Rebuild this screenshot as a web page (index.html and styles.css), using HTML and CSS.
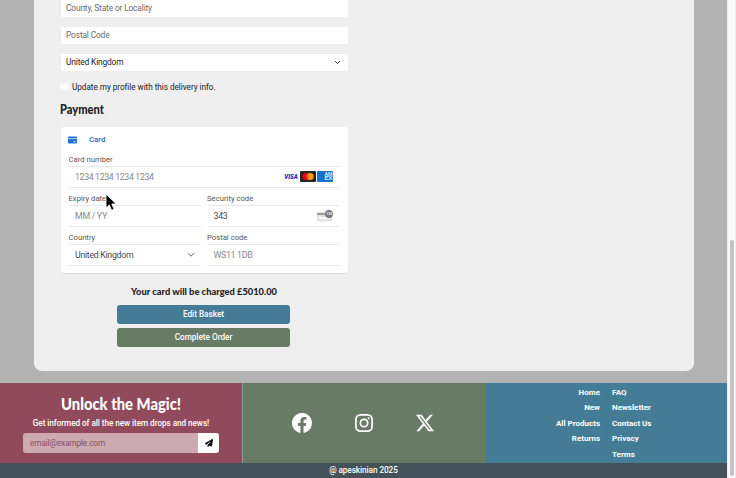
FILE: index.html
```html
<!DOCTYPE html>
<html lang="en">
<head>
<meta charset="utf-8">
<title>Checkout</title>
<link rel="stylesheet" href="styles.css">
</head>
<body>
<div class="page">
  <main class="panel">
    <form class="checkout">
      <div class="field first">County, State or Locality</div>
      <div class="field">Postal Code</div>
      <div class="field select"><span>United Kingdom</span><svg width="7" height="5" viewBox="0 0 7 5"><path d="M1 1l2.5 2.5L6 1" fill="none" stroke="#444" stroke-width="1"/></svg></div>
      <label class="update"><i class="box"></i><span>Update my profile with this delivery info.</span></label>
      <h2 class="heading"><svg width="60" height="20"><text x="0" y="14" textLength="44" lengthAdjust="spacingAndGlyphs">Payment</text></svg></h2>
      <section class="card">
        <div class="method">
          <svg width="9" height="8" viewBox="0 0 9 8"><rect y=".5" width="9" height="7" rx="1" fill="#2470d0"/><path d="M0 2.6h9" stroke="#d5e5fa" stroke-width=".8"/><path d="M5.5 5.8h2" stroke="#fff" stroke-width=".8"/></svg>
          <span>Card</span>
        </div>
        <div class="label">Card number</div>
        <div class="input"><span class="muted number">1234 1234 1234 1234</span>
          <span class="brands">
            <svg width="16" height="11" viewBox="0 0 16 11"><rect x=".3" y=".3" width="15.4" height="10.4" rx="1" fill="#fff" stroke="#eee" stroke-width=".6"/><text x="1.2" y="7.8" class="visa" textLength="13.6" lengthAdjust="spacingAndGlyphs">VISA</text></svg>
            <svg width="16" height="11" viewBox="0 0 16 11"><rect width="16" height="11" rx="1" fill="#252525"/><circle cx="5.8" cy="5.5" r="3.5" fill="#eb001b"/><circle cx="10.2" cy="5.5" r="3.5" fill="#f79e1b"/><path d="M8 2.8a3.5 3.5 0 010 5.4a3.5 3.5 0 010-5.4" fill="#ff5f00"/></svg>
            <svg width="16" height="11" viewBox="0 0 16 11"><rect width="16" height="11" rx="1" fill="#1672cf"/><text x="7.5" y="5.2" class="amex" textLength="8" lengthAdjust="spacingAndGlyphs">AM</text><text x="7.5" y="9.4" class="amex" textLength="8" lengthAdjust="spacingAndGlyphs">EX</text></svg>
          </span>
        </div>
        <div class="pair">
          <div><div class="label">Expiry date</div><div class="input"><span class="muted">MM / YY</span></div></div>
          <div><div class="label">Security code</div><div class="input"><span>343</span>
            <svg class="cvc" width="16" height="12" viewBox="0 0 16 12"><rect y="2" width="15" height="9.5" rx="1" fill="#e2e2e2"/><path d="M0 4h12" stroke="#888" stroke-width="1.5"/><path d="M2 8h9" stroke="#fff" stroke-width="1.6"/><circle cx="12" cy="4" r="4" fill="#77777a"/><text x="9.2" y="5.3" class="digits">123</text></svg></div></div>
        </div>
        <div class="pair">
          <div><div class="label">Country</div><div class="input"><span>United Kingdom</span><svg class="chev" width="8" height="6" viewBox="0 0 8 6"><path d="M1 1.2l3 3 3-3" fill="none" stroke="#666"/></svg></div></div>
          <div><div class="label">Postal code</div><div class="input"><span class="muted">WS11 1DB</span></div></div>
        </div>
      </section>
      <p class="charge"><svg width="148" height="13"><text x="1" y="10" textLength="146" lengthAdjust="spacingAndGlyphs">Your card will be charged £5010.00</text></svg></p>
      <button class="btn blue" type="button">Edit Basket</button>
      <button class="btn green" type="button">Complete Order</button>
    </form>
  </main>
  <footer class="footer">
    <section class="news">
      <h3><svg width="140" height="24"><text x="10" y="18" textLength="120" lengthAdjust="spacingAndGlyphs">Unlock the Magic!</text></svg></h3>
      <p>Get informed of all the new item drops and news!</p>
      <div class="signup"><span class="email">email@example.com</span><span class="send"><svg width="8" height="8" viewBox="0 0 512 512"><path fill="#111" d="M498.100 5.600c10.100 7 15.400 19.100 13.500 31.200l-64 416c-1.500 9.700-7.400 18.200-16 23s-18.900 5.400-28 1.600L284 427.700l-68.500 74.100c-8.900 9.700-22.900 12.900-35.200 8.100S160 493.200 160 480v-83.600c0-4 1.500-7.800 4.200-10.800l167.600-182.800c5.800-6.300 5.600-16-.4-22s-15.700-6.400-22-.7L106 360.800 17.700 316.600C7.100 311.300.3 300.700 0 288.900s5.900-22.800 16.100-28.700l448-256c10.700-6.100 23.900-5.500 34 1.400z"/></svg></span></div>
    </section>
    <section class="social">
      <svg width="20" height="20" viewBox="0 0 16 16" fill="#fff"><path d="M16 8.049c0-4.446-3.582-8.050-8-8.050C3.580 0-.002 3.603-.002 8.050c0 4.017 2.926 7.347 6.750 7.951v-5.625h-2.030V8.050H6.750V6.275c0-2.017 1.195-3.131 3.022-3.131.876 0 1.791.157 1.791.157v1.980h-1.009c-.993 0-1.303.621-1.303 1.258v1.510h2.218l-.354 2.326H9.250V16c3.824-.604 6.750-3.934 6.750-7.951"/></svg>
      <svg width="18" height="18" viewBox="0 0 18 18" fill="none" stroke="#fff" stroke-width="1.700"><rect x=".9" y=".9" width="16.200" height="16.200" rx="4.500"/><circle cx="9" cy="9" r="3.700"/><circle cx="13.700" cy="4.300" r="1.100" fill="#fff" stroke="none"/></svg>
      <svg width="18" height="18" viewBox="0 0 16 16" fill="#fff"><path d="M12.600.75h2.454l-5.360 6.142L16 15.250h-4.937l-3.867-5.070-4.425 5.070H.316l5.733-6.570L0 .75h5.063l3.495 4.633L12.601.75Zm-.86 13.028h1.360L4.323 2.145H2.865z"/></svg>
    </section>
    <nav class="links">
      <ul class="left"><li>Home</li><li>New</li><li>All Products</li><li>Returns</li></ul>
      <ul><li>FAQ</li><li>Newsletter</li><li>Contact Us</li><li>Privacy</li><li>Terms</li></ul>
    </nav>
  </footer>
  <div class="copyright">@ apeskinian 2025</div>
</div>
<div class="track"><div class="thumb"></div></div>
<svg class="cursor" width="13" height="19" viewBox="0 0 13 19"><path d="M1 1v14l3.300-3.100 2.300 5.400 2.500-1.100-2.300-5.200h4.500z" fill="#000" stroke="#fff" stroke-width=".9"/></svg>
</body>
</html>
```
FILE: styles.css
```css
* { box-sizing: border-box; }
body { margin: 0; width: 736px; height: 478px; overflow: hidden; display: flex; font: 8px/12px Roboto, sans-serif; color: #222; background: #fff; }
.page { width: 727px; height: 478px; background: #b3b3b3; }
.panel { margin: 0 33px 12px 34px; height: 371px; background: #efefef; border-radius: 0 0 8px 8px; }
.checkout { margin-left: 27px; width: 287px; display: flex; flex-direction: column; }
.field { height: 17px; margin-bottom: 10px; padding: 0 7px 0 5px; background: #fff; color: #6b6b6b; display: flex; align-items: center; justify-content: space-between; font-size: 8.400px; line-height: 17px; letter-spacing: -.15px; }
.field.select { color: #222; margin-bottom: 9px; }
.update { display: flex; align-items: center; height: 13px; gap: 3px; margin-left: -1px; font-size: 8.200px; letter-spacing: -.04px; white-space: nowrap; }
.box { width: 9px; height: 7px; background: #fafafa; border-radius: 2px; }
h2 svg, h3 svg, p svg { display: block; overflow: visible; }
h2 text, h3 text, p text { fill: currentColor; }
.heading { margin: 7px 0 7px -1px; font: 900 12.600px/20px Lato, sans-serif; color: #222; }
.card { height: 146px; padding: 7px 9px 0 8px; background: #fff; border-radius: 3px; box-shadow: 0 1px 1px #ddd; color: #555; }
.method { height: 12px; display: flex; align-items: center; gap: 12px; margin-left: -1px; color: #246bc4; font-weight: 500; font-size: 7.800px; margin-bottom: 8px; }
.label { height: 12px; font-size: 7.700px; margin-left: -.5px; }
.input { height: 22px; margin-bottom: 5px; padding: 0 6px; border: solid #e8e8e8; border-width: 1px 0; display: flex; align-items: center; justify-content: space-between; font-size: 8.800px; line-height: 11px; letter-spacing: -.3px; color: #4a4a4a; }
.muted { color: #898989; }
.number { letter-spacing: -.37px; }
.brands { display: flex; gap: 1px; margin-top: -1px; }
.visa { font: italic 900 6.500px Roboto, sans-serif; letter-spacing: 0; fill: #1a2fae; }
.amex { font: 700 4.600px Roboto, sans-serif; letter-spacing: 0; fill: #d6e8fc; }
.digits { font: 700 3.500px Roboto, sans-serif; letter-spacing: 0; fill: #fff; }
.pair { display: grid; grid-template-columns: 1fr 1fr; column-gap: 7px; }
.charge { margin: 12px 0 7px -1px; height: 13px; font: 900 9.400px/13px Lato, sans-serif; display: flex; justify-content: center; }
.btn { width: 173px; height: 19px; margin: 0 auto 4px 56px; padding: 0; border: 0; border-radius: 3px; color: #fff; font: 500 8.200px/19px Roboto, sans-serif; }
.blue { background: #437c94; }
.green { background: #677b65; }
.footer { height: 80px; display: grid; grid-template-columns: 242px 244px 241px; color: #fff; font-weight: 500; }
.news { background: #914a5b; display: flex; flex-direction: column; align-items: center; }
.news h3 { margin: 9px 0 2px; font: 900 16.500px/24px Lato, sans-serif; }
.news p { margin: 0 0 4px; font-size: 8.200px; letter-spacing: -.06px; line-height: 11px; white-space: nowrap; }
.signup { width: 196px; height: 20px; display: flex; border-radius: 3px; overflow: hidden; }
.email { flex: 1; padding-left: 7px; background: #cda9b1; color: #86515f; font-weight: 400; font-size: 8.300px; letter-spacing: -.15px; line-height: 20px; }
.send { width: 21px; background: #fff; display: grid; place-items: center; }
.social { background: #677b65; border-left: 1px solid #8d9b8c; display: flex; align-items: center; justify-content: center; gap: 43px; padding-right: 4px; }
.links { background: #437c94; display: grid; grid-template-columns: 114px 115px; column-gap: 12px; padding-top: 2px; }
.links ul { margin: 0; padding: 0; list-style: none; line-height: 15.400px; font-weight: 700; font-size: 8px; }
.links .left { text-align: right; }
.copyright { height: 15px; background: #435158; color: #fff; text-align: center; font-weight: 500; font-size: 8.200px; letter-spacing: -.06px; line-height: 15px; }
.track { width: 9px; height: 478px; background: #fafafa; border: solid #eee; border-width: 0 1px; padding: 240px 2px 0; }
.thumb { width: 4px; height: 236px; background: #c4c4c4; border-radius: 2px; }
.cursor { position: absolute; left: 105px; top: 193px; }
```
